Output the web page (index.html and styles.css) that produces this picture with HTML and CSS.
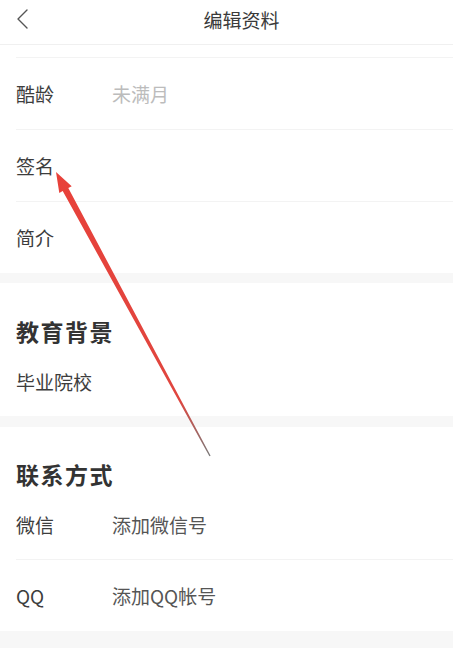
FILE: index.html
```html
<!DOCTYPE html>
<html lang="zh-CN">
<head>
<meta charset="utf-8">
<title>编辑资料</title>
<link rel="stylesheet" href="styles.css">
</head>
<body>
<div class="page">
  <header class="topbar">
    <svg class="back" width="14" height="22" viewBox="0 0 14 22"><path d="M11 2 L2 11 L11 20" fill="none" stroke="#555" stroke-width="1.4" stroke-linecap="round" stroke-linejoin="round"/></svg>
    <h1 class="title">编辑资料</h1>
  </header>
  <div class="spacer"></div>
  <section class="group">
    <div class="divider"></div>
    <div class="row"><span class="label">酷龄</span><span class="value muted">未满月</span></div>
    <div class="divider"></div>
    <div class="row"><span class="label">签名</span></div>
    <div class="divider"></div>
    <div class="row"><span class="label">简介</span></div>
  </section>
  <div class="band"></div>
  <section class="group">
    <h2 class="heading">教育背景</h2>
    <div class="row row-short"><span class="label">毕业院校</span></div>
  </section>
  <div class="band band-2"></div>
  <section class="group">
    <h2 class="heading heading-2">联系方式</h2>
    <div class="row row-short"><span class="label">微信</span><span class="value">添加微信号</span></div>
    <div class="divider"></div>
    <div class="row"><span class="label">QQ</span><span class="value">添加QQ帐号</span></div>
  </section>
  <div class="band band-end"></div>

  <svg class="arrow" width="453" height="648" viewBox="0 0 453 648">
    <defs>
      <linearGradient id="ag" gradientUnits="userSpaceOnUse" x1="56" y1="172" x2="210" y2="456">
        <stop offset="0" stop-color="#e8413a"/>
        <stop offset="0.8" stop-color="#e0463f"/>
        <stop offset="1" stop-color="#7a7a7a"/>
      </linearGradient>
    </defs>
    <polygon points="56,172 71.7,186.3 68.3,188.1 210.6,455.7 209.4,456.3 62.7,191.1 59.3,192.9" fill="url(#ag)"/>
  </svg>
</div>
</body>
</html>
```

FILE: styles.css
```css
html, body {
  margin: 0;
  padding: 0;
  background: #ffffff;
}

body {
  font-family: "Noto Sans CJK SC", "Noto Sans", "Liberation Sans", sans-serif;
  color: #383838;
}

.page {
  position: relative;
  width: 453px;
  height: 648px;
  overflow: hidden;
  background: #fff;
}

.topbar {
  height: 44px;
  border-bottom: 1px solid #f0f0f0;
  display: flex;
  align-items: center;
  padding: 0 0 0 16px;
  box-sizing: content-box;
}

.back {
  display: block;
  margin-top: -6px;
}

.title {
  flex: 1;
  margin: -5px 0 0 0;
  text-align: center;
  font-size: 19px;
  font-weight: normal;
  color: #3a3a3a;
}

.spacer {
  height: 12px;
}

.group {
  display: flex;
  flex-direction: column;
}

.divider {
  height: 1px;
  margin-left: 16px;
  background: #f3f3f3;
}

.row {
  height: 71px;
  display: flex;
  align-items: center;
  padding-left: 16px;
  font-size: 19px;
}

.row-short {
  height: 70px;
}

.label {
  width: 96px;
  color: #3d3d3d;
}

.value {
  color: #555;
}

.muted {
  color: #bcbcbc;
}

.band {
  height: 10px;
  background: #f7f7f7;
}

.band-2 {
  height: 11px;
}

.band-end {
  height: 20px;
}

.heading {
  margin: 0;
  padding: 33px 0 0 16px;
  height: 30px;
  line-height: 30px;
  font-size: 23px;
  font-weight: bold;
  letter-spacing: 1.5px;
  color: #333;
}

.heading-2 {
  padding-top: 32px;
}

.arrow {
  position: absolute;
  left: 0;
  top: 0;
  pointer-events: none;
}
```
